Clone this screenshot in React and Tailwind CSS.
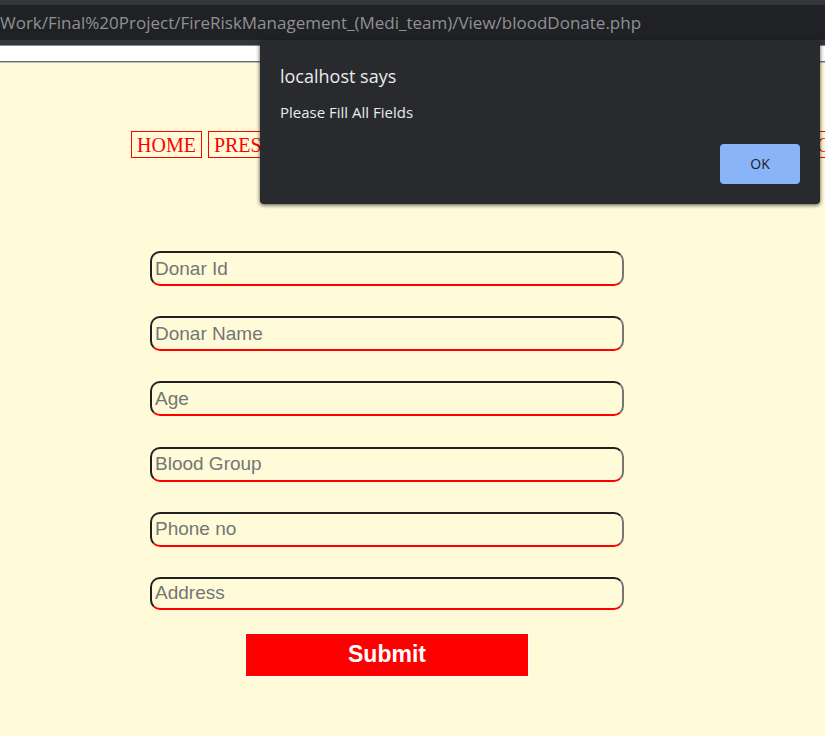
import React from "react";

const fields = [
  { id: "donarId", label: "Donar Id", height: "h-[35px]" },
  { id: "donarName", label: "Donar Name", height: "h-[35px]" },
  { id: "age", label: "Age", height: "h-[35px]" },
  { id: "bloodGroup", label: "Blood Group", height: "h-[35px]" },
  { id: "phone", label: "Phone no", height: "h-[35px]" },
  { id: "address", label: "Address", height: "h-[33px]" },
];

function AddressBar() {
  return (
    <header className="border-y-[5px] border-[#35363a] bg-[#202124]">
      <p className="h-[35px] overflow-hidden whitespace-nowrap font-['Open_Sans',sans-serif] text-[17px] leading-[35px] text-[#8f9194]">
        Work/Final%20Project/FireRiskManagement_(Medi_team)/View/bloodDonate.php
      </p>
    </header>
  );
}

function Alert() {
  return (
    <div
      role="alertdialog"
      aria-labelledby="alert-title"
      aria-describedby="alert-text"
      className="absolute right-[5px] top-[41px] flex w-[560px] flex-col rounded-[4px] bg-[#292a2d] px-5 pb-5 pt-[23px] font-['Open_Sans',sans-serif] text-[#e8eaed] shadow-[0_1px_4px_rgba(0,0,0,0.7)]"
    >
      <h1 id="alert-title" className="text-[18px] leading-6">localhost says</h1>
      <p id="alert-text" className="mt-3 text-[15px] leading-6">Please Fill All Fields</p>
      <button type="button" className="mt-5 h-10 w-20 self-end rounded-[4px] bg-[#8ab4f8] pb-0.5 text-[14px] font-medium text-[#202124]">
        OK
      </button>
    </div>
  );
}

export default function App() {
  return (
    <div className="relative min-h-screen overflow-hidden bg-[#fffbd9]">
      <AddressBar />
      <div className="h-[17px] border-y border-b-[#6a6a70] border-t-[#85868a] bg-white shadow-[0_1px_0_#bcbcbc]" />
      <div className="ml-auto mr-[5px] mt-[37px] h-[25px] w-[200px] bg-[#202124]" />
      <nav className="mt-[7px] flex gap-[6px] pl-[131px] font-['Liberation_Serif',serif] text-[20px] leading-6 text-[#ff0000]">
        <a href="#home" className="border border-[#ff0000] px-[5px] pt-px">HOME</a>
        <a href="#press" className="border border-[#ff0000] px-[5px] pt-px">PRESS</a>
        <a href="#contact" className="ml-auto w-[14px] border border-r-0 border-[#ff0000] pl-[5px] pt-px">C</a>
      </nav>
      <form className="ml-[150px] mr-10 mt-[93px] max-w-[474px]" onSubmit={(e) => e.preventDefault()}>
        <div className="flex h-[359px] flex-col justify-between">
          {fields.map((f) => (
            <input
              key={f.id}
              id={f.id}
              type="text"
              aria-label={f.label}
              placeholder={f.label}
              className={`${f.height} w-full shrink-0 rounded-[10px] border-2 border-b-[#ff0000] border-l-[#202020] border-r-[#767676] border-t-[#202020] bg-transparent px-[3px] font-['Liberation_Sans',sans-serif] text-[19px] placeholder:text-[#757575]`}
            />
          ))}
        </div>
        <button type="submit" className="mx-auto mt-6 block h-[42px] w-[282px] bg-[#ff0000] pb-0.5 font-['Liberation_Sans',sans-serif] text-[23px] font-bold text-white ring-1 ring-white">
          Submit
        </button>
      </form>
      <Alert />
    </div>
  );
}
